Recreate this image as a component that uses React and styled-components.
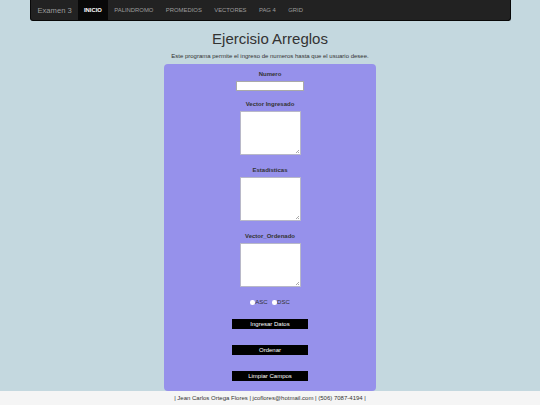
import styled, { createGlobalStyle } from "styled-components";

const GlobalStyle = createGlobalStyle`
  html, body {
    margin: 0;
    padding: 0;
    background: #c4d8df;
    font-family: "Liberation Sans", Arial, sans-serif;
    color: #333;
  }
`;

const Page = styled.div`
  min-height: 405px;
  display: flex;
  flex-direction: column;
  align-items: center;
`;

const NavBar = styled.nav`
  width: 481px;
  height: 21px;
  box-sizing: border-box;
  background: #222;
  border: 1px solid #080808;
  border-top: none;
  border-radius: 0 0 3px 3px;
  display: flex;
  align-items: stretch;
  padding-left: 7px;
`;

const Brand = styled.span`
  display: flex;
  align-items: center;
  font-size: 7.6px;
  color: #9d9d9d;
  padding-right: 6px;
`;

const NavItem = styled.span`
  display: flex;
  align-items: center;
  padding: 0 6.2px;
  font-size: 5.9px;
  text-transform: uppercase;
  color: ${(p) => (p.$active ? "#fff" : "#9d9d9d")};
  background: ${(p) => (p.$active ? "#080808" : "transparent")};
  font-weight: ${(p) => (p.$active ? "bold" : "normal")};
`;

const Title = styled.h1`
  margin: 9px 0 0;
  font-size: 15px;
  line-height: 17px;
  font-weight: normal;
  color: #333;
`;

const Intro = styled.p`
  margin: 5.5px 0 0;
  font-size: 6px;
  line-height: 7px;
`;

const Panel = styled.form`
  margin-top: 4.2px;
  width: 212px;
  box-sizing: border-box;
  background: #9691eb;
  border-radius: 4px;
  padding: 7.5px 0 10px;
  display: flex;
  flex-direction: column;
  align-items: center;
`;

const Field = styled.div`
  display: flex;
  flex-direction: column;
  align-items: center;
  gap: 3.3px;
  margin-bottom: ${(p) => p.$space}px;
`;

const Label = styled.label`
  font-size: 6px;
  line-height: 7px;
  font-weight: bold;
  color: #333;
`;

const TextInput = styled.input`
  width: 68px;
  height: 10px;
  box-sizing: border-box;
  border: 1px solid #a9a9a9;
  padding: 0;
  background: #fff;
`;

const TextArea = styled.textarea`
  width: 61px;
  height: 44px;
  box-sizing: border-box;
  border: 1px solid #b8b8c8;
  padding: 0;
  background: #fff;
  resize: none;
  background-image: linear-gradient(135deg, transparent 60%, #aaa 60%, #aaa 68%, transparent 68%, transparent 80%, #aaa 80%, #aaa 88%, transparent 88%);
  background-size: 4px 4px;
  background-position: right 1px bottom 1px;
  background-repeat: no-repeat;
`;

const RadioRow = styled.div`
  display: flex;
  align-items: center;
  font-size: 6px;
  line-height: 7px;
  color: #333;
  margin-bottom: 12.8px;
`;

const Radio = styled.span`
  width: 4.5px;
  height: 4.5px;
  border-radius: 50%;
  background: #fff;
  margin-right: 0.5px;
  margin-left: ${(p) => (p.$first ? 0 : 4.5)}px;
`;

const ActionButton = styled.button`
  width: 76px;
  height: 10.5px;
  padding: 0;
  border: none;
  border-radius: 0;
  background: #000;
  color: #fff;
  font-family: "Liberation Sans", Arial, sans-serif;
  font-size: 6px;
  line-height: 10.5px;
  margin-bottom: ${(p) => p.$space}px;
`;

const Footer = styled.footer`
  margin-top: auto;
  width: 100%;
  height: 14px;
  background: #f5f5f5;
  display: flex;
  align-items: center;
  justify-content: center;
  font-size: 6px;
  color: #333;
`;

const links = ["Palindromo", "Promedios", "Vectores", "Pag 4", "Grid"];

export default function App() {
  return (
    <Page>
      <GlobalStyle />
      <NavBar>
        <Brand>Examen 3</Brand>
        <NavItem $active>Inicio</NavItem>
        {links.map((l) => (
          <NavItem key={l}>{l}</NavItem>
        ))}
      </NavBar>
      <Title>Ejercisio Arreglos</Title>
      <Intro>Este programa permite el ingreso de numeros hasta que el usuario desee.</Intro>
      <Panel onSubmit={(e) => e.preventDefault()}>
        <Field $space={9.5}>
          <Label>Numero</Label>
          <TextInput type="text" />
        </Field>
        <Field $space={11.5}>
          <Label>Vector Ingresado</Label>
          <TextArea />
        </Field>
        <Field $space={11.5}>
          <Label>Estadisticas</Label>
          <TextArea />
        </Field>
        <Field $space={12.2}>
          <Label>Vector_Ordenado</Label>
          <TextArea />
        </Field>
        <RadioRow>
          <Radio $first />
          ASC
          <Radio />
          DSC
        </RadioRow>
        <ActionButton type="button" $space={15.3}>Ingresar Datos</ActionButton>
        <ActionButton type="button" $space={15.4}>Ordenar</ActionButton>
        <ActionButton type="button" $space={0}>Limpiar Campos</ActionButton>
      </Panel>
      <Footer>| Jean Carlos Ortega Flores | jcoflores@hotmail.com | (506) 7087-4194 |</Footer>
    </Page>
  );
}
